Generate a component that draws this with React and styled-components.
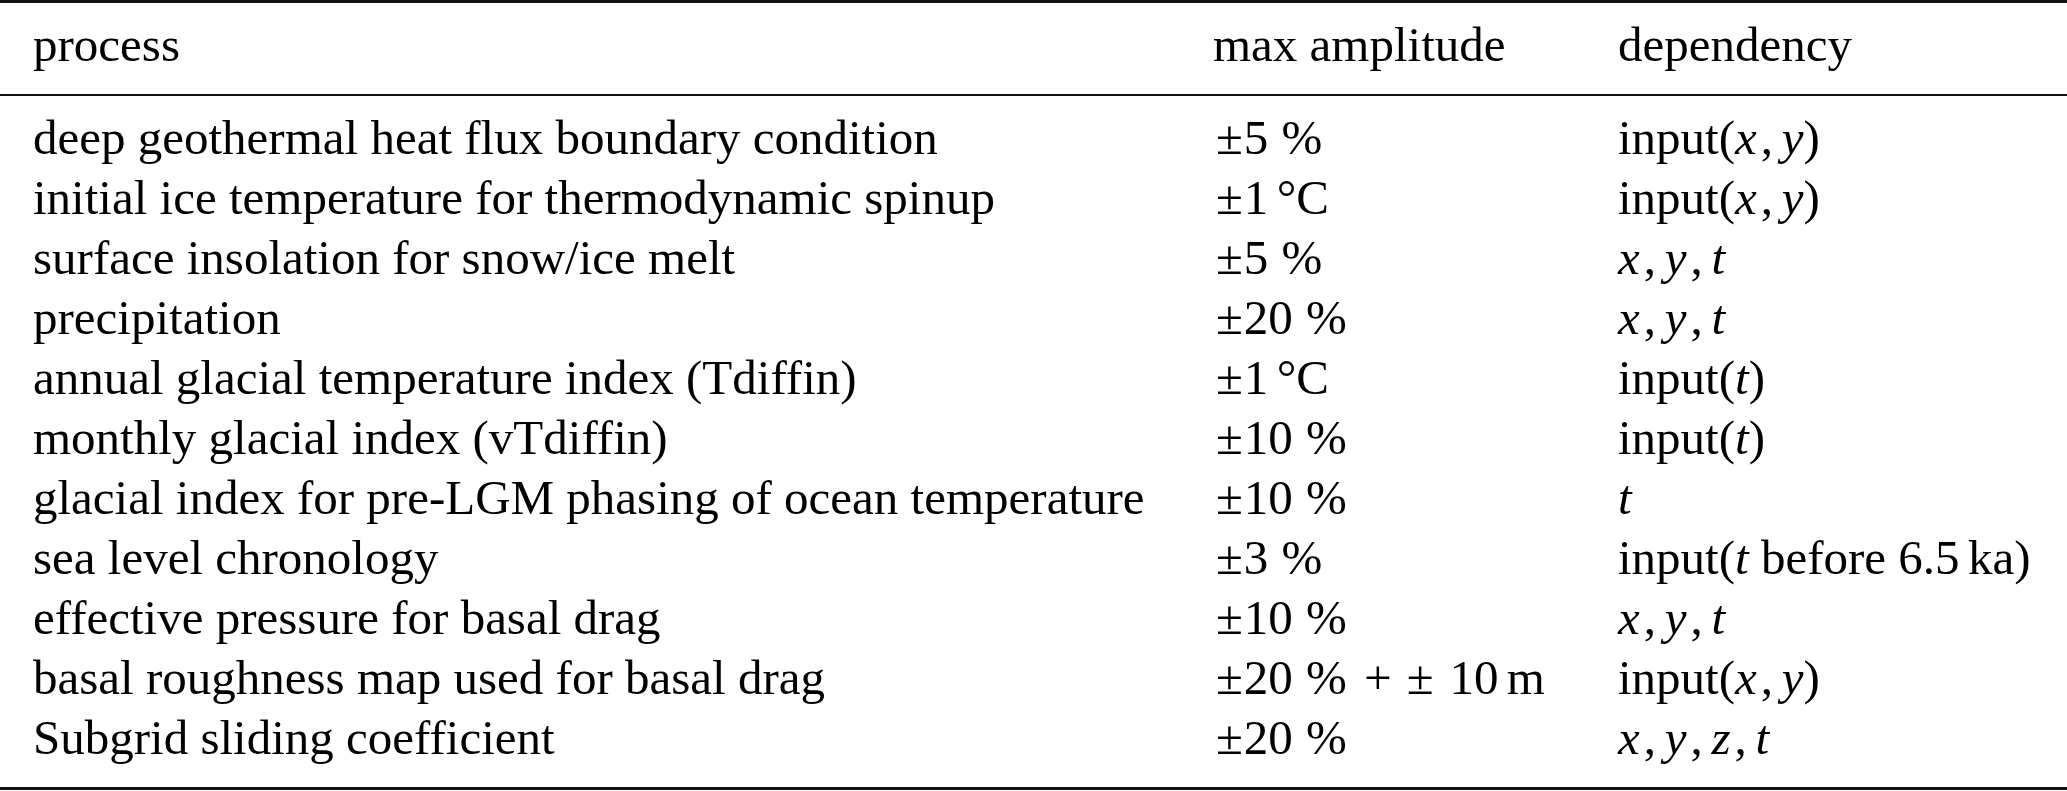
import React from 'react';
import styled, { createGlobalStyle } from 'styled-components';

const GlobalStyle = createGlobalStyle`
  html, body {
    margin: 0;
    padding: 0;
    background: #ffffff;
  }
  body {
    font-family: "Liberation Serif", "Times New Roman", serif;
    color: #000;
  }
`;

const Table = styled.table`
  width: 2067px;
  border-collapse: separate;
  border-spacing: 0;
  table-layout: fixed;
  border-top: 3px solid #111;
  border-bottom: 3px solid #111;
  font-family: "Liberation Serif", "Times New Roman", serif;
  font-size: 49px;
  line-height: 60px;
  color: #000;
`;

const HeadCell = styled.th`
  text-align: left;
  font-weight: normal;
  white-space: nowrap;
  padding: 12px 0 19px ${p => p.$pad || 0}px;
  width: ${p => p.$w ? `${p.$w}px` : 'auto'};
  border-bottom: 2px solid #111;
`;

const Cell = styled.td`
  white-space: nowrap;
  padding: 0 0 0 ${p => p.$pad || 0}px;
`;

const Row = styled.tr`
  &:first-child td {
    padding-top: 12px;
  }
  &:last-child td {
    padding-bottom: 19px;
  }
`;

// math italic variables
const M = styled.i`
  font-style: italic;
`;

// math-style plus-minus
const Pm = styled.span`
  margin-left: 0.06em;
  margin-right: 0.02em;
`;

const Thin = styled.span`
  display: inline-block;
  width: ${p => p.$w || 0.17}em;
`;

const T = () => <Thin />;
const P = () => <><Thin $w={0.27} />%</>;
const C = () => <><Thin $w={0.08} />,<Thin $w={0.18} /></>;

const rows = [
  ['deep geothermal heat flux boundary condition', <><Pm>±</Pm>5<P /></>, <>input(<M>x</M><C /><M>y</M>)</>],
  ['initial ice temperature for thermodynamic spinup', <><Pm>±</Pm>1<T />°C</>, <>input(<M>x</M><C /><M>y</M>)</>],
  ['surface insolation for snow/ice melt', <><Pm>±</Pm>5<P /></>, <><M>x</M><C /><M>y</M><C /><M>t</M></>],
  ['precipitation', <><Pm>±</Pm>20<P /></>, <><M>x</M><C /><M>y</M><C /><M>t</M></>],
  ['annual glacial temperature index (Tdiffin)', <><Pm>±</Pm>1<T />°C</>, <>input(<M>t</M>)</>],
  ['monthly glacial index (vTdiffin)', <><Pm>±</Pm>10<P /></>, <>input(<M>t</M>)</>],
  ['glacial index for pre-LGM phasing of ocean temperature', <><Pm>±</Pm>10<P /></>, <M>t</M>],
  ['sea level chronology', <><Pm>±</Pm>3<P /></>, <>input(<M>t</M> before 6.5<T />ka)</>],
  ['effective pressure for basal drag', <><Pm>±</Pm>10<P /></>, <><M>x</M><C /><M>y</M><C /><M>t</M></>],
  ['basal roughness map used for basal drag', <><Pm>±</Pm>20<P /><Thin $w={0.35} />+<Thin $w={0.25} /><Pm>±</Pm><Thin $w={0.3} />10<T />m</>, <>input(<M>x</M><C /><M>y</M>)</>],
  ['Subgrid sliding coefficient', <><Pm>±</Pm>20<P /></>, <><M>x</M><C /><M>y</M><C /><M>z</M><C /><M>t</M></>],
];

export default function App() {
  return (
    <>
      <GlobalStyle />
      <Table>
        <thead>
          <tr>
            <HeadCell $pad={33} $w={1180}>process</HeadCell>
            <HeadCell $w={405}>max amplitude</HeadCell>
            <HeadCell>dependency</HeadCell>
          </tr>
        </thead>
        <tbody>
          {rows.map((r, i) => (
            <Row key={i}>
              <Cell $pad={33}>{r[0]}</Cell>
              <Cell>{r[1]}</Cell>
              <Cell>{r[2]}</Cell>
            </Row>
          ))}
        </tbody>
      </Table>
    </>
  );
}
